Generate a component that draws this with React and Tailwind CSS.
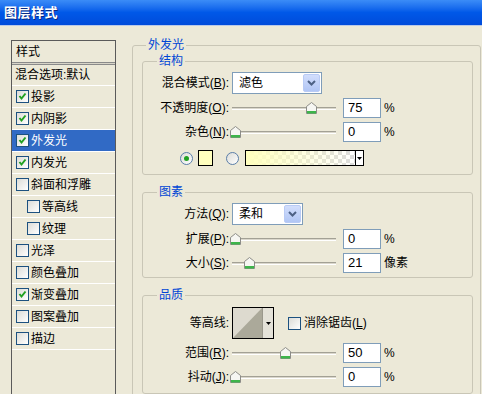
import React from 'react';

const styleItems = [
    { t: '投影', on: true },
    { t: '内阴影', on: true },
    { t: '外发光', on: true, sel: true },
    { t: '内发光', on: true },
    { t: '斜面和浮雕' },
    { t: '等高线', sub: true },
    { t: '纹理', sub: true },
    { t: '光泽' },
    { t: '颜色叠加' },
    { t: '渐变叠加', on: true },
    { t: '图案叠加' },
    { t: '描边' },
];

const Check = ({ on }) => (
    <span className="w-[13px] h-[13px] shrink-0 border border-[#1C5180] bg-gradient-to-br from-[#DCDCD7] to-white flex items-center justify-center">
        {on && (
            <svg width="9" height="9" viewBox="0 0 9 9">
                <path d="M1.5 4 L3.5 6.5 L7.5 1.5" stroke="#21A121" strokeWidth="2" fill="none" />
            </svg>
        )}
    </span>
);

const Radio = ({ on }) => (
    <span className="w-[13px] h-[13px] shrink-0 rounded-full border border-[#5A7EA8] bg-gradient-to-br from-[#DCDCD7] to-white flex items-center justify-center">
        {on && <span className="w-[5px] h-[5px] rounded-full bg-[#21A121]" />}
    </span>
);

const Thumb = () => (
    <svg width="11" height="12" viewBox="0 0 11 12">
        <path d="M0.5 4.5 L5.5 0.5 L10.5 4.5 V11.5 H0.5 Z" fill="#F6F6F2" stroke="#8C8C88" />
        <rect x="1" y="9" width="9" height="2.5" fill="#3DB54A" />
    </svg>
);

const Slider = ({ pos }) => (
    <div className="relative w-[104px] h-[20px] shrink-0">
        <div className="absolute left-0 right-0 top-[9px] h-[3px] bg-[#DAD7CC] border-t border-[#A3A195] border-b border-b-white" />
        <div className="absolute top-[4px]" style={{ left: pos - 5 }}>
            <Thumb />
        </div>
    </div>
);

const Field = ({ v }) => (
    <div className="ml-[7px] w-[38px] h-[20px] shrink-0 border border-[#7F9DB9] bg-white pl-[4px] flex items-center text-[13px] text-black">
        {v}
    </div>
);

const Label = ({ children }) => (
    <div className="w-[86px] shrink-0 text-right whitespace-nowrap">{children}</div>
);

const Select = ({ value, w }) => (
    <div className={`ml-[3px] h-[22px] shrink-0 border border-[#7F9DB9] bg-white flex items-center justify-between pl-[6px] pr-[1px] ${w}`}>
        <span>{value}</span>
        <span className="w-[17px] h-[18px] rounded-[2px] bg-gradient-to-b from-[#D2DEFC] to-[#B1C6F5] border border-[#B9CBF5] flex items-center justify-center">
            <svg width="9" height="6" viewBox="0 0 9 6">
                <path d="M1 1 L4.5 4.5 L8 1" stroke="#4D6185" strokeWidth="2" fill="none" />
            </svg>
        </span>
    </div>
);

const SliderRow = ({ label, pos, v, unit = '%' }) => (
    <div className="flex items-center h-[20px] mt-[4px]">
        <Label>{label}</Label>
        <div className="ml-[3px]">
            <Slider pos={pos} />
        </div>
        <Field v={v} />
        <span className="ml-[3px]">{unit}</span>
    </div>
);

const Group = ({ title, children, className = '' }) => (
    <fieldset className={`border border-[#C9C6B6] rounded-[3px] w-[331px] ${className}`}>
        <legend className="ml-[14px] px-[2px] leading-[14px] text-[#0046D5]">{title}</legend>
        {children}
    </fieldset>
);

export default function App() {
    return (
        <div className="w-[482px] h-[394px] overflow-hidden bg-[#ECE9D8] flex flex-col text-[12px] text-black font-['Liberation_Sans','Noto_Sans_CJK_SC',sans-serif]">
            {/* Title bar */}
            <div className="h-[26px] shrink-0 bg-gradient-to-b from-[#3B8CF7] via-[#0058E8] to-[#004BDA] border-b border-[#B9C9E8] flex items-center pl-[4px]">
                <span className="text-white font-bold text-[13px] tracking-[0.5px] [text-shadow:1px_1px_#0A2A83]">图层样式</span>
            </div>

            <div className="flex flex-1 min-h-0">
                {/* Styles list */}
                <div className="ml-[11px] mt-[14px] w-[105px] h-[400px] shrink-0 border border-[#5A5A5A]">
                    <div className="h-[21px] flex items-center pl-[4px]">样式</div>
                    <div className="h-[3px] border-y border-[#8A8A8A] bg-[#D8D5C8]" />
                    <div className="h-[21px] flex items-center pl-[3px] border-b border-white whitespace-nowrap">混合选项:默认</div>
                    {styleItems.map((s) => (
                        <div
                            key={s.t}
                            className={`h-[22px] flex items-center gap-[2px] border-b border-white ${s.sub ? 'pl-[15px]' : 'pl-[4px]'} ${s.sel ? 'bg-[#316AC5] text-white' : ''}`}
                        >
                            <Check on={s.on} />
                            <span className="whitespace-nowrap">{s.t}</span>
                        </div>
                    ))}
                </div>

                {/* Outer glow settings */}
                <fieldset className="ml-[16px] mt-[12px] w-[349px] h-[420px] shrink-0 border border-[#C9C6B6] rounded-[3px]">
                    <legend className="ml-[13px] px-[2px] leading-[14px] text-[#0046D5]">外发光</legend>
                    <div className="pl-[9px] pt-[2px] flex flex-col gap-[10px]">
                        <Group title="结构" className="pb-[7px]">
                            <div className="flex items-center h-[22px] mt-[4px]">
                                <Label>混合模式(<u>B</u>):</Label>
                                <Select value="滤色" w="w-[90px]" />
                            </div>
                            <SliderRow label={<>不透明度(<u>O</u>):</>} pos={79} v="75" />
                            <SliderRow label={<>杂色(<u>N</u>):</>} pos={3} v="0" />
                            <div className="flex items-center h-[18px] mt-[7px] pl-[37px]">
                                <Radio on />
                                <span className="ml-[5px] w-[15px] h-[16px] border border-black bg-[#FFFFBE]" />
                                <span className="ml-[13px]">
                                    <Radio />
                                </span>
                                <div className="ml-[6px] w-[119px] h-[16px] border border-black flex">
                                    <div className="flex-1 bg-[linear-gradient(to_right,#FFFFBE,rgba(255,255,190,0)),repeating-conic-gradient(#DCDCDC_0_25%,#FFFFFF_0_50%)] bg-[length:100%_100%,8px_8px]" />
                                    <div className="w-[8px] border-l border-black bg-white flex items-center justify-center">
                                        <svg width="5" height="3" viewBox="0 0 5 3">
                                            <path d="M0 0 H5 L2.5 3 Z" fill="#000" />
                                        </svg>
                                    </div>
                                </div>
                            </div>
                        </Group>

                        <Group title="图素" className="pb-[4px]">
                            <div className="flex items-center h-[22px] mt-[4px]">
                                <Label>方法(<u>Q</u>):</Label>
                                <Select value="柔和" w="w-[71px]" />
                            </div>
                            <SliderRow label={<>扩展(<u>P</u>):</>} pos={3} v="0" />
                            <SliderRow label={<>大小(<u>S</u>):</>} pos={17} v="21" unit="像素" />
                        </Group>

                        <Group title="品质" className="pb-[6px]">
                            <div className="flex items-center h-[32px] mt-[5px]">
                                <Label>等高线:</Label>
                                <div className="ml-[3px] w-[42px] h-[32px] border border-black flex bg-[#E4E2D8]">
                                    <svg width="29" height="30" viewBox="0 0 29 30">
                                        <rect width="29" height="30" fill="#DDDACF" />
                                        <polygon points="0,30 29,0 29,30" fill="#ABA99A" />
                                    </svg>
                                    <div className="flex-1 border-l border-[#9A988C] flex items-center justify-center">
                                        <svg width="5" height="3" viewBox="0 0 5 3">
                                            <path d="M0 0 H5 L2.5 3 Z" fill="#000" />
                                        </svg>
                                    </div>
                                </div>
                                <span className="ml-[14px]">
                                    <Check />
                                </span>
                                <span className="ml-[3px]">消除锯齿(<u>L</u>)</span>
                            </div>
                            <SliderRow label={<>范围(<u>R</u>):</>} pos={53} v="50" />
                            <SliderRow label={<>抖动(<u>J</u>):</>} pos={3} v="0" />
                        </Group>
                    </div>
                </fieldset>
            </div>
        </div>
    );
}
